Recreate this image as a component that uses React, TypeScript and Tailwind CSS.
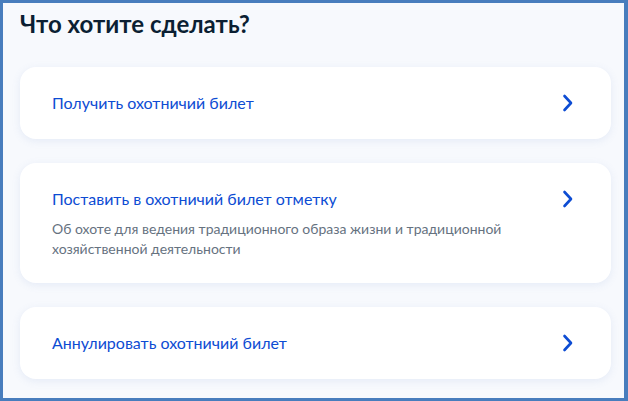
const items = [
  { title: 'Получить охотничий билет' },
  {
    title: 'Поставить в охотничий билет отметку',
    desc: 'Об охоте для ведения традиционного образа жизни и традиционной хозяйственной деятельности',
  },
  { title: 'Аннулировать охотничий билет' },
];

function Chevron() {
  return (
    <svg width="12" height="18" viewBox="0 0 12 18" fill="none" className="shrink-0">
      <path d="M2.5 2L9 9L2.5 16" stroke="#0d4cd3" strokeWidth="2.6" strokeLinecap="round" strokeLinejoin="round" />
    </svg>
  );
}

export default function App() {
  return (
    <div
      className="w-[628px] h-[401px] overflow-hidden border-[3px] border-r-4 border-[#487dbd] bg-[#f7f9fd]"
      style={{ fontFamily: 'Lato, "Noto Sans", sans-serif' }}
    >
      <div className="pl-[17px] pr-[13px] pt-[5px]">
        <h1 className="text-[24px] leading-[32px] font-bold text-[#0b1f33]">Что хотите сделать?</h1>

        <div className="mt-[27px] flex flex-col gap-6">
          {items.map((item) => (
            <div
              key={item.title}
              className="bg-white rounded-2xl shadow-[0_2px_8px_rgba(102,135,194,0.12)] pl-8 pr-[37px] py-6 flex items-start justify-between"
            >
              <div className="flex flex-col">
                <div className="text-[16px] leading-6 text-[#0d4cd3]">{item.title}</div>
                {item.desc && (
                  <div className="mt-2 max-w-[470px] text-[14px] leading-5 text-[#66727f]">{item.desc}</div>
                )}
              </div>
              <div className="h-6 flex items-center">
                <Chevron />
              </div>
            </div>
          ))}
        </div>
      </div>
    </div>
  );
}
